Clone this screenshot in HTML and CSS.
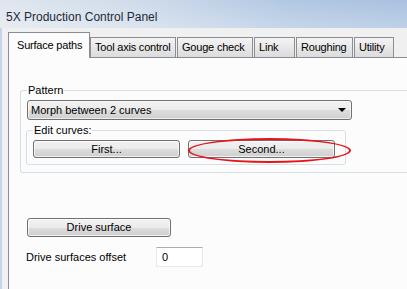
FILE: index.html
```html
<!DOCTYPE html>
<html>
<head>
<meta charset="utf-8">
<link rel="stylesheet" href="styles.css">
</head>
<body>
<div class="window">
  <div class="titlebar">5X Production Control Panel</div>
  <div class="frame">
    <div class="tabs">
      <div class="tab selected">Surface paths</div>
      <div class="tab t-tool">Tool axis control</div>
      <div class="tab t-gouge">Gouge check</div>
      <div class="tab t-link">Link</div>
      <div class="tab t-rough">Roughing</div>
      <div class="tab t-util">Utility</div>
    </div>
    <div class="panel">
      <fieldset class="group pattern">
        <legend>Pattern</legend>
        <div class="combo">
          <span>Morph between 2 curves</span>
          <span class="arrow"></span>
        </div>
        <fieldset class="group edit">
          <legend>Edit curves:</legend>
          <div class="btnrow">
            <div class="btn curve">First...</div>
            <div class="btn curve second">Second...
              <span class="ellipse"></span>
            </div>
          </div>
        </fieldset>
      </fieldset>
      <div class="btn drive">Drive surface</div>
      <div class="offset">
        <span class="label">Drive surfaces offset</span>
        <div class="input">0</div>
      </div>
    </div>
  </div>
</div>
</body>
</html>
```
FILE: styles.css
```css
* { box-sizing: border-box; }
html, body {
  margin: 0;
  padding: 0;
  width: 407px;
  height: 289px;
  overflow: hidden;
  background: #f0f0f0;
  font-family: "Liberation Sans", Arial, sans-serif;
  font-size: 11px;
  color: #000;
}
.window { width: 407px; height: 289px; display: flex; flex-direction: column; overflow: hidden; }
.titlebar {
  height: 28px;
  flex: none;
  padding: 9px 0 0 6px;
  font-size: 12px;
  line-height: 16px;
  color: #1e2a38;
  background:
    linear-gradient(180deg, rgba(255,255,255,0.0) 0%, rgba(255,255,255,0.25) 100%),
    linear-gradient(90deg, #dfe6ee 0%, #cfdbea 35%, #b2c8e3 70%, #a9c1df 100%);
}
.frame {
  flex: 1;
  display: flex;
  flex-direction: column;
  border-left: 2px solid #c4d5ea;
  padding: 4px 0 0 6px;
  overflow: hidden;
}
.tabs {
  display: flex;
  align-items: flex-end;
  height: 25px;
  flex: none;
  position: relative;
  z-index: 1;
}
.tab {
  height: 20px;
  line-height: 18px;
  padding: 0 0 0 4px;
  margin-left: 1px;
  border: 1px solid #8c8e94;
  border-bottom: none;
  background: linear-gradient(#f4f4f4, #e8e8e8 50%, #dcdcdc);
  white-space: nowrap;
  overflow: hidden;
  letter-spacing: -0.2px;
}
.t-tool { width: 86px; margin-left: 0; }
.t-gouge { width: 76px; }
.t-link { width: 41px; }
.t-rough { width: 57px; }
.t-util { width: 40px; }
.tab.selected {
  width: 82px;
  margin-left: 0;
  padding: 3px 0 0 8px;
  background: #fcfcfc;
  border-color: #898c95;
  height: 26px;
  margin-bottom: -1px;
}
.panel {
  flex: 1;
  background: #fcfcfc;
  border-left: 1px solid #898c95;
  border-top: 1px solid #898c95;
  padding: 26px 0 0 11px;
  overflow: hidden;
}
.group {
  margin: 0;
  border: 1px solid #d5dfe5;
  border-radius: 3px;
}
.group legend {
  padding: 0 1px;
  line-height: 13px;
  color: #000;
}
.pattern {
  width: 387px;
  border-right: none;
  border-radius: 3px 0 0 3px;
  padding: 3px 0 7px 6px;
}
.combo {
  width: 325px;
  height: 20px;
  border: 1px solid #707070;
  border-radius: 3px;
  background: linear-gradient(#f2f2f2 0%, #ebebeb 50%, #dddddd 51%, #cfcfcf 100%);
  box-shadow: inset 0 0 0 1px rgba(255,255,255,0.6);
  display: flex;
  align-items: center;
  justify-content: space-between;
  padding: 0 5px 0 3px;
  line-height: 18px;
}
.arrow {
  width: 0; height: 0;
  border-left: 4px solid transparent;
  border-right: 4px solid transparent;
  border-top: 4px solid #000;
}
.edit {
  width: 320px;
  margin: 4px 0 0 -1px;
  padding: 3px 10px 6px 6px;
}
.btnrow { display: flex; gap: 8px; }
.btn {
  height: 18px;
  border: 1px solid #707070;
  border-radius: 3px;
  background: linear-gradient(#f2f2f2 0%, #ebebeb 50%, #dddddd 51%, #cfcfcf 100%);
  box-shadow: inset 0 0 0 1px rgba(255,255,255,0.7);
  text-align: center;
  line-height: 16px;
  color: #000;
}
.curve { width: 147px; }
.second { position: relative; }
.ellipse {
  position: absolute;
  left: -1px;
  top: -3px;
  width: 163px;
  height: 25px;
  border: 2px solid #e8141c;
  border-radius: 50%;
}
.drive {
  width: 144px;
  height: 19px;
  line-height: 17px;
  margin: 45px 0 0 7px;
}
.offset {
  display: flex;
  align-items: center;
  margin: 10px 0 0 6px;
}
.label { width: 130px; }
.input {
  width: 47px;
  height: 20px;
  border: 1px solid #e3e9ef;
  border-top-color: #abadb3;
  background: #fff;
  padding: 0 0 0 5px;
  line-height: 18px;
}
```
